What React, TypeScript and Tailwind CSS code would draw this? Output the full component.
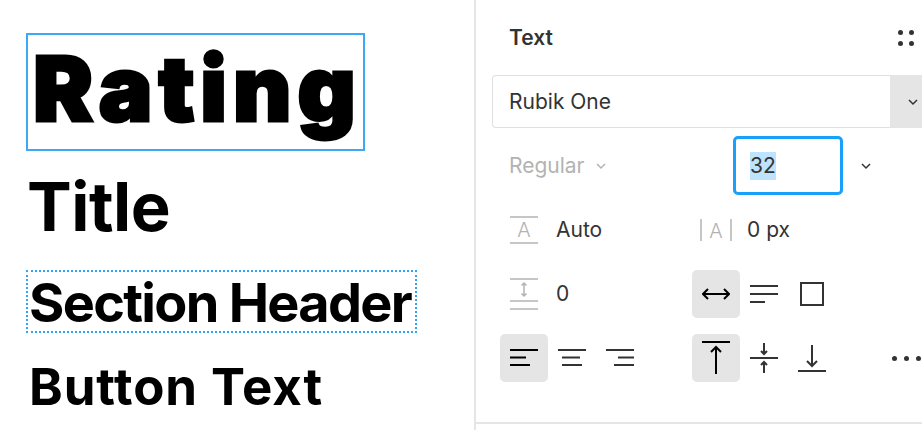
import React from 'react';

const ink = '#333333';

const Chevron: React.FC<{ color?: string; size?: number }> = ({ color = ink, size = 12 }) => (
  <svg width={size} height={size} viewBox="0 0 12 12" fill="none">
    <path d="M2 4l4 4 4-4" stroke={color} strokeWidth="1.5" />
  </svg>
);

const IconButton: React.FC<{ active?: boolean; children: React.ReactNode }> = ({ active, children }) => (
  <div className={`w-12 h-12 shrink-0 rounded-[5px] flex items-center justify-center ${active ? 'bg-[#e5e5e5]' : ''}`}>
    {children}
  </div>
);

const App: React.FC = () => {
  return (
    <div className="flex w-[922px] h-[430px] bg-white overflow-hidden" style={{ fontFamily: 'Inter, sans-serif' }}>
      {/* canvas */}
      <div className="w-[474px] shrink-0 flex flex-col items-start pl-[26px] pt-[33px]">
        <div className="border-2 border-[#3ca9f7] w-[339px] h-[118px] pl-[5px] pt-[9px]">
          <div className="text-[90px] leading-[90px] font-black text-black tracking-[6px] [-webkit-text-stroke:3px_#000]">Rating</div>
        </div>
        <div className="mt-[22px] pl-[1px] text-[67px] leading-[67px] font-bold text-black tracking-[-0.5px]">Title</div>
        <div className="mt-[30px] border-2 border-dotted border-[#2ea6f8] w-[391px] h-[63px] pl-[1px] pt-[4px]">
          <div className="text-[54px] leading-[54px] font-bold text-black whitespace-nowrap tracking-[-1.7px]">Section Header</div>
        </div>
        <div className="mt-[28px] pl-[3px] text-[51px] leading-[51px] font-bold text-black tracking-[0.9px]">Button Text</div>
      </div>

      {/* properties panel */}
      <div className="flex-1 min-w-0 overflow-hidden border-l-2 border-[#e5e5e5] flex flex-col text-[21px] text-[#333]">
        <div className="h-[75px] flex items-center justify-between pl-[33px] pr-[8px]">
          <span className="font-semibold">Text</span>
          <svg width="16" height="16" viewBox="0 0 16 16" fill="#333">
            <circle cx="2.5" cy="2.5" r="2.5" />
            <circle cx="13.5" cy="2.5" r="2.5" />
            <circle cx="2.5" cy="13.5" r="2.5" />
            <circle cx="13.5" cy="13.5" r="2.5" />
          </svg>
        </div>

        <div className="ml-4 h-[53px] flex shrink-0">
          <div className="w-[398px] shrink-0 flex items-center pl-[16px] bg-white border border-r-0 border-[#e0e0e0] rounded-l-[4px]">
            Rubik One
          </div>
          <div className="w-[64px] shrink-0 bg-[#e5e5e5] flex items-center pl-[17px]">
            <Chevron />
          </div>
        </div>

        <div className="mt-[8px] h-[59px] flex items-center pl-6">
          <div className="w-[192px] shrink-0 flex items-center gap-[10px] pl-[9px] text-[#b3b3b3]">
            <span>Regular</span>
            <Chevron color="#b3b3b3" />
          </div>
          <div className="ml-[41px] w-[110px] h-[59px] shrink-0 border-[3px] border-[#18a0fb] rounded-[5px] flex items-center pl-[14px]">
            <span className="bg-[#bde3fd] leading-[28px]">32</span>
          </div>
          <div className="ml-[17px]">
            <Chevron />
          </div>
        </div>

        <div className="mt-[11px] h-12 flex items-center pl-6">
          <div className="w-[192px] shrink-0 flex items-center">
            <IconButton>
              <svg width="28" height="28" viewBox="0 0 28 28" fill="none">
                <line x1="0" y1="1" x2="28" y2="1" stroke="#b3b3b3" strokeWidth="1.5" />
                <line x1="0" y1="27" x2="28" y2="27" stroke="#b3b3b3" strokeWidth="1.5" />
                <text x="14" y="21" textAnchor="middle" fontSize="20" fontWeight="300" fill="#b3b3b3" fontFamily="Inter, sans-serif">A</text>
              </svg>
            </IconButton>
            <span className="ml-2">Auto</span>
          </div>
          <IconButton>
            <svg width="34" height="24" viewBox="0 0 34 24" fill="none">
              <line x1="2" y1="1" x2="2" y2="23" stroke="#b3b3b3" strokeWidth="1.5" />
              <line x1="32" y1="1" x2="32" y2="23" stroke="#b3b3b3" strokeWidth="1.5" />
              <text x="17" y="20" textAnchor="middle" fontSize="20" fontWeight="300" fill="#b3b3b3" fontFamily="Inter, sans-serif">A</text>
            </svg>
          </IconButton>
          <span className="ml-[7px]">0 px</span>
        </div>

        <div className="mt-4 h-12 flex items-center pl-6">
          <div className="w-[192px] shrink-0 flex items-center">
            <IconButton>
              <svg width="28" height="32" viewBox="0 0 28 32" fill="none" stroke="#b3b3b3" strokeWidth="1.5">
                <line x1="0" y1="1" x2="28" y2="1" />
                <line x1="0" y1="23" x2="28" y2="23" />
                <line x1="0" y1="31" x2="28" y2="31" />
                <path d="M14 5v13M11.5 7.5L14 5l2.5 2.5M11.5 15.5L14 18l2.5-2.5" />
              </svg>
            </IconButton>
            <span className="ml-2">0</span>
          </div>
          <IconButton active>
            <svg width="28" height="14" viewBox="0 0 28 14" fill="none" stroke="#000" strokeWidth="2">
              <path d="M1 7h26M6 2L1 7l5 5M22 2l5 5-5 5" />
            </svg>
          </IconButton>
          <IconButton>
            <svg width="28" height="18" viewBox="0 0 28 18" fill="none" stroke={ink} strokeWidth="2">
              <path d="M0 1h28M0 9h28M0 17h15" />
            </svg>
          </IconButton>
          <IconButton>
            <svg width="24" height="24" viewBox="0 0 24 24" fill="none" stroke={ink} strokeWidth="2">
              <rect x="1" y="1" width="22" height="22" />
            </svg>
          </IconButton>
        </div>

        <div className="mt-4 h-12 flex items-center pl-6">
          <div className="w-[192px] shrink-0 flex items-center">
            <IconButton active>
              <svg width="28" height="18" viewBox="0 0 28 18" fill="none" stroke="#000" strokeWidth="2">
                <path d="M0 1h28M0 8.5h16M0 16h20" />
              </svg>
            </IconButton>
            <IconButton>
              <svg width="28" height="18" viewBox="0 0 28 18" fill="none" stroke={ink} strokeWidth="2">
                <path d="M0 1h28M4 8.5h18M4 16h20" />
              </svg>
            </IconButton>
            <IconButton>
              <svg width="28" height="18" viewBox="0 0 28 18" fill="none" stroke={ink} strokeWidth="2">
                <path d="M0 1h28M12 8.5h16M8 16h20" />
              </svg>
            </IconButton>
          </div>
          <IconButton active>
            <svg width="28" height="34" viewBox="0 0 28 34" fill="none" stroke="#000" strokeWidth="2">
              <path d="M0 1h28M14 6v27M9 11l5-5 5 5" />
            </svg>
          </IconButton>
          <IconButton>
            <svg width="28" height="30" viewBox="0 0 28 30" fill="none" stroke={ink} strokeWidth="2">
              <path d="M0 15h28M14 0v11M11 8l3 3 3-3M14 19v11M11 22l3-3 3 3" />
            </svg>
          </IconButton>
          <IconButton>
            <svg width="28" height="28" viewBox="0 0 28 28" fill="none" stroke={ink} strokeWidth="2">
              <path d="M0 27h28M14 1v21M9 17l5 5 5-5" />
            </svg>
          </IconButton>
          <div className="ml-auto pr-[1px] flex gap-[7px]">
            <span className="w-[5px] h-[5px] rounded-full bg-[#333]" />
            <span className="w-[5px] h-[5px] rounded-full bg-[#333]" />
            <span className="w-[5px] h-[5px] rounded-full bg-[#333]" />
          </div>
        </div>

        <div className="mt-[40px] border-t-2 border-[#e5e5e5]" />
      </div>
    </div>
  );
};

export default App;
